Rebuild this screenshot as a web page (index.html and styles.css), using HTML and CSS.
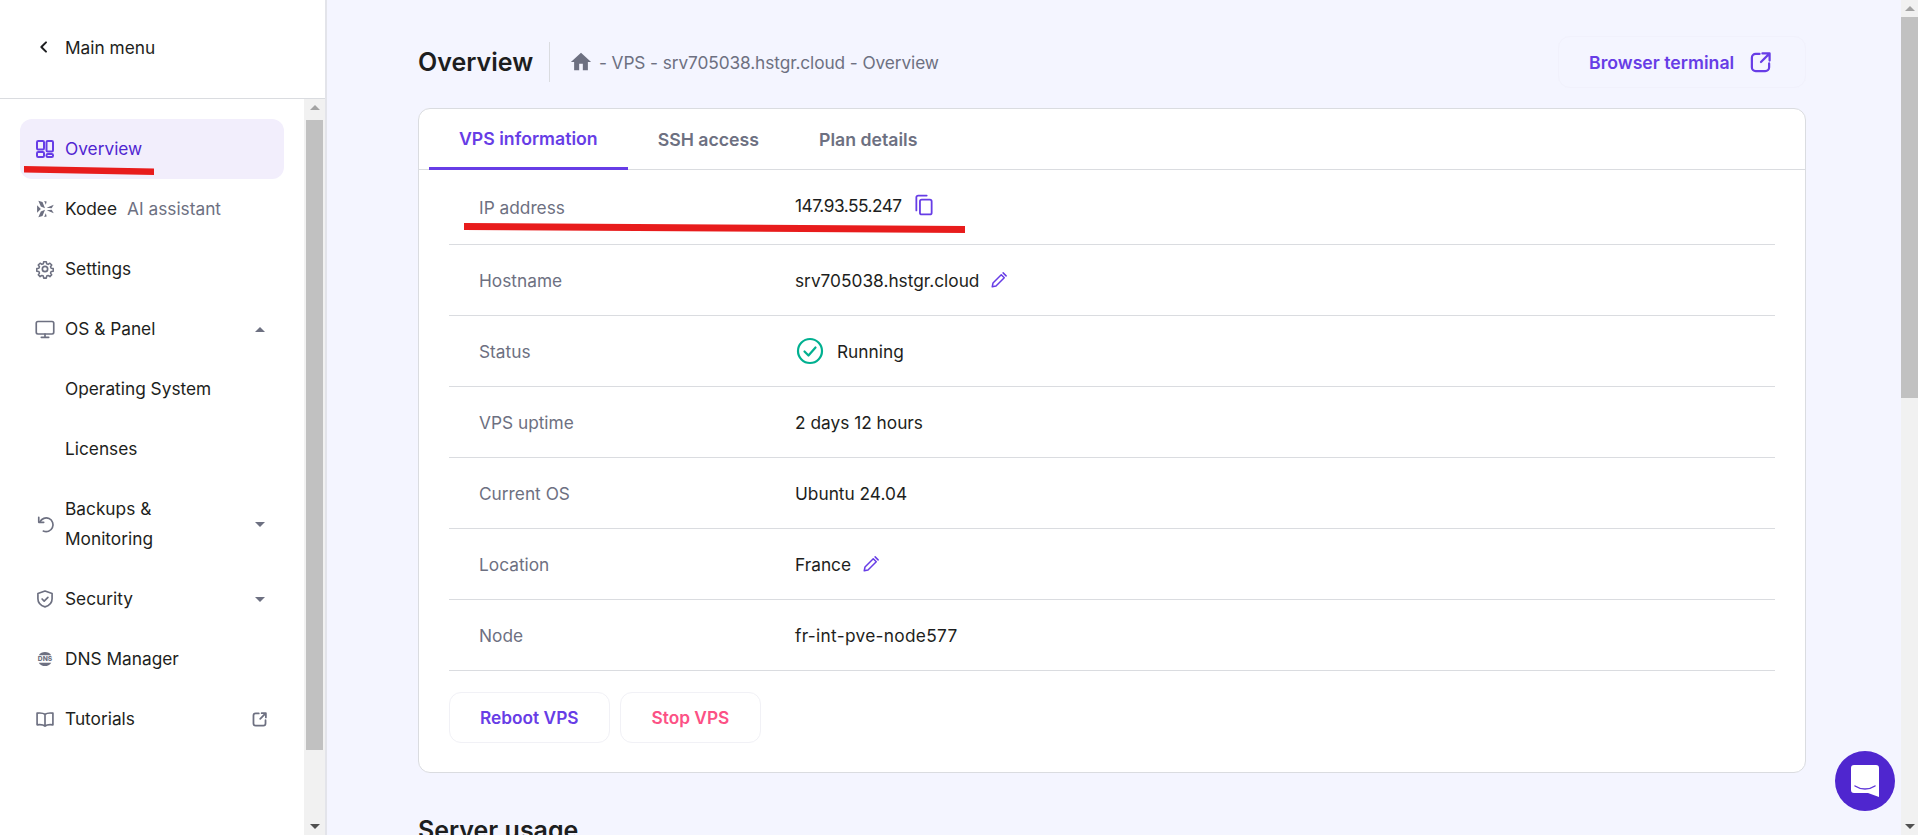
FILE: index.html
```html
<!DOCTYPE html>
<html lang="en">
<head>
    <meta charset="UTF-8">
    <title>Overview | VPS</title>
    <link rel="stylesheet" href="styles.css">
</head>
<body>
    <aside class="sidebar">
        <div class="side-top">
            <svg class="back" viewBox="0 0 24 24"><path d="M15 5l-7 7 7 7"/></svg>
            <span>Main menu</span>
        </div>
        <div class="side-body">
            <nav class="side-nav">
                <a class="nav-item active">
                    <svg class="ico" viewBox="0 0 20 20"><rect x="2" y="2" width="7" height="8.500" rx="1.200"/><rect x="11.500" y="2" width="6.500" height="10.500" rx="1.200"/><rect x="2" y="13" width="7" height="5" rx="1.200"/><rect x="11.500" y="15" width="6.500" height="3" rx="1.200"/></svg>
                    <span>Overview</span>
                </a>
                <a class="nav-item">
                    <svg class="ico" viewBox="0 0 24 24"><path class="solid" d="M4 2l5 1.500L12 11 7 9zM4 22l5-1.500L12 13l-5 2zM2.500 7.500L7 12l-4.500 4.500zM14 10.500L22.500 7 20 11zM14 13.500l8.500 3.500L20 13zM11 2.500l3 .5-1 4zM11 21.500l3-.5-1-4z"/></svg>
                    <span>Kodee</span><span class="nav-note">AI assistant</span>
                </a>
                <a class="nav-item">
                    <svg class="ico" viewBox="0 0 24 24"><circle cx="12" cy="12" r="3.200"/><path d="M10.300 2.500h3.400l.5 2.700 1.900.8 2.300-1.600 2.400 2.400-1.600 2.300.8 1.900 2.700.5v3.400l-2.700.5-.8 1.900 1.600 2.300-2.400 2.400-2.300-1.600-1.900.8-.5 2.700h-3.400l-.5-2.700-1.900-.8-2.300 1.600-2.400-2.400 1.600-2.300-.8-1.900-2.700-.5v-3.400l2.700-.5.8-1.900-1.600-2.300 2.400-2.400 2.300 1.600 1.900-.8z" transform="translate(12 12) scale(.92) translate(-12 -12)"/></svg>
                    <span>Settings</span>
                </a>
                <a class="nav-item">
                    <svg class="ico" viewBox="0 0 24 24"><rect x="1.500" y="3" width="21" height="15" rx="2"/><path d="M12 18v3.500M7.500 22h9"/></svg>
                    <span>OS &amp; Panel</span>
                    <i class="caret up"></i>
                </a>
                <a class="nav-item sub"><span>Operating System</span></a>
                <a class="nav-item sub"><span>Licenses</span></a>
                <a class="nav-item tall">
                    <svg class="ico" viewBox="0 0 24 24"><path d="M6 9.500A8.200 8.200 0 1 1 10 20.400"/><path d="M4.500 4v6h6"/></svg>
                    <span>Backups &amp;<br>Monitoring</span>
                    <i class="caret"></i>
                </a>
                <a class="nav-item">
                    <svg class="ico" viewBox="0 0 24 24"><path d="M12 2.500l8.500 3v6.200c0 5-3.600 8.300-8.500 9.800-4.900-1.500-8.500-4.800-8.500-9.800V5.500z"/><path d="M8.500 12l2.500 2.500 4.500-4.500"/></svg>
                    <span>Security</span>
                    <i class="caret"></i>
                </a>
                <a class="nav-item">
                    <svg class="ico" viewBox="0 0 24 24"><path class="solid" d="M4.500 7.500a9 9 0 0 1 15 0zM4.500 16.500a9 9 0 0 0 15 0z"/><text class="dns-text" x="12" y="14.800">DNS</text></svg>
                    <span>DNS Manager</span>
                </a>
                <a class="nav-item">
                    <svg class="ico" viewBox="0 0 24 24"><path d="M12 6.500C10 4.800 6.500 4.500 2.500 5v14c4-.5 7.500-.2 9.500 1.500 2-1.700 5.500-2 9.500-1.500V5c-4-.5-7.500-.2-9.500 1.500zM12 6.500v14"/></svg>
                    <span>Tutorials</span>
                    <svg class="ext" viewBox="0 0 24 24"><path d="M11 3.500H6.500a3 3 0 0 0-3 3v11a3 3 0 0 0 3 3h11a3 3 0 0 0 3-3V13M13 11l7.500-7.500M15 3h6v6"/></svg>
                </a>
            </nav>
            <div class="scrollbar">
                <i class="arrow up"></i>
                <div class="track side-track"><div class="thumb side-thumb"></div></div>
                <i class="arrow"></i>
            </div>
        </div>
        <svg class="scribble scribble-nav" viewBox="0 0 130 9" preserveAspectRatio="none"><path d="M0 0L130 2.500V9L0 6.500z"/></svg>
    </aside>

    <main class="content">
        <div class="page-head">
            <h1>Overview</h1>
            <div class="crumbs">
                <svg class="home" viewBox="0 0 24 24"><path d="M10 21v-7h4v7h5.500v-9H23L12 2 1 12h3.500v9z"/></svg>
                <span>- VPS - srv705038.hstgr.cloud - Overview</span>
            </div>
            <a class="btn-terminal">
                <span>Browser terminal</span>
                <svg viewBox="0 0 24 24"><path d="M11 3H7A4 4 0 0 0 3 7v10a4 4 0 0 0 4 4h10a4 4 0 0 0 4-4v-4M12.500 11.500L21 3M14 2.500h7.500V10"/></svg>
            </a>
        </div>

        <section class="card">
            <div class="tabs">
                <a class="tab active">VPS information</a>
                <a class="tab">SSH access</a>
                <a class="tab">Plan details</a>
            </div>
            <div class="rows">
                <div class="row first">
                    <div class="row-label">IP address</div>
                    <div class="row-value ip">
                        <span>147.93.55.247</span>
                        <svg class="copy" viewBox="0 0 20 24"><path d="M1.500 18V3.500a2 2 0 0 1 2-2H13"/><rect x="5.500" y="6" width="13" height="16.500" rx="2"/></svg>
                    </div>
                </div>
                <div class="row">
                    <div class="row-label">Hostname</div>
                    <div class="row-value">
                        <span>srv705038.hstgr.cloud</span>
                        <svg class="edit" viewBox="0 0 24 24"><path d="M3 21l1-5L15 5l4 4L8 20zM17.500 2.500l4 4"/></svg>
                    </div>
                </div>
                <div class="row">
                    <div class="row-label">Status</div>
                    <div class="row-value status">
                        <svg class="ok" viewBox="0 0 28 28"><circle cx="14" cy="14" r="12"/><path d="M8.500 14.500l4 4 7-8"/></svg>
                        <span>Running</span>
                    </div>
                </div>
                <div class="row">
                    <div class="row-label">VPS uptime</div>
                    <div class="row-value"><span>2 days 12 hours</span></div>
                </div>
                <div class="row">
                    <div class="row-label">Current OS</div>
                    <div class="row-value"><span>Ubuntu 24.04</span></div>
                </div>
                <div class="row">
                    <div class="row-label">Location</div>
                    <div class="row-value">
                        <span>France</span>
                        <svg class="edit" viewBox="0 0 24 24"><path d="M3 21l1-5L15 5l4 4L8 20zM17.500 2.500l4 4"/></svg>
                    </div>
                </div>
                <div class="row">
                    <div class="row-label">Node</div>
                    <div class="row-value node"><span>fr-int-pve-node577</span></div>
                </div>
            </div>
            <div class="actions">
                <button class="btn-action reboot">Reboot VPS</button>
                <button class="btn-action stop">Stop VPS</button>
            </div>
            <svg class="scribble scribble-ip" viewBox="0 0 501 10" preserveAspectRatio="none"><path d="M0 0L501 3V10L0 7z"/></svg>
        </section>

        <h2 class="section-title">Server usage</h2>

        <button class="chat">
            <svg viewBox="0 0 28 32"><path class="bubble" d="M3 0h22a3 3 0 0 1 3 3v29l-11-4H3a3 3 0 0 1-3-3V3a3 3 0 0 1 3-3z"/><path class="smile" d="M4 21c6 4 14 4 20 0"/></svg>
        </button>
    </main>

    <div class="scrollbar page-bar">
        <i class="arrow up"></i>
        <div class="track page-track"><div class="thumb page-thumb"></div></div>
        <i class="arrow"></i>
    </div>
</body>
</html>
```

FILE: styles.css
```css
* {
    box-sizing: border-box;
}
html, body {
    height: 100%;
}
body {
    margin: 0;
    display: flex;
    height: 835px;
    overflow: hidden;
    font-family: Inter, "Noto Sans", sans-serif;
    font-size: 17.3px;
    color: #1d1e20;
    background-color: #f4f5ff;
}
svg {
    fill: none;
    stroke: currentColor;
    stroke-width: 2;
    stroke-linecap: round;
    stroke-linejoin: round;
    flex: none;
}

/* sidebar */
.sidebar {
    position: relative;
    width: 327px;
    flex: none;
    display: flex;
    flex-direction: column;
    background-color: #fff;
    border-right: 2px solid #e3e4ea;
}
.side-top {
    height: 99px;
    flex: none;
    display: flex;
    align-items: center;
    padding: 0 0 4px 36px;
    gap: 13px;
    border-bottom: 1px solid #dadce0;
}
.back {
    width: 16px;
    height: 16px;
    stroke-width: 3;
}
.side-body {
    flex: 1;
    display: flex;
    min-height: 0;
}
.side-nav {
    flex: 1;
    padding: 20px 20px 0;
}
.nav-item {
    height: 60px;
    display: flex;
    align-items: center;
    padding: 0 16px 0 15px;
    gap: 10px;
    border-radius: 12px;
    line-height: 30px;
}
.nav-item.active {
    background-color: #f2eefc;
    color: #5025d1;
}
.nav-item.active .ico {
    color: #673de6;
}
.nav-item.tall {
    height: 90px;
}
.nav-item.sub {
    padding-left: 45px;
}
.nav-note {
    color: #6d7081;
}
.ico {
    width: 20px;
    height: 20px;
    color: #6d7081;
}
.solid {
    fill: currentColor;
    stroke: none;
}
.dns-text {
    font-size: 8px;
    font-weight: 800;
    text-anchor: middle;
    fill: currentColor;
    stroke: none;
}
.caret {
    margin-left: auto;
    margin-right: 3px;
    border-left: 5px solid transparent;
    border-right: 5px solid transparent;
    border-top: 5px solid #6d7081;
}
.caret.up {
    border-top: 0;
    border-bottom: 5px solid #6d7081;
}
.ext {
    width: 17px;
    height: 17px;
    margin-left: auto;
    color: #6d7081;
    stroke-width: 2.500;
}

/* fake scrollbars */
.scrollbar {
    width: 21px;
    flex: none;
    display: flex;
    flex-direction: column;
    align-items: center;
    background-color: #f1f1f1;
}
.track {
    flex: 1;
    width: 100%;
    padding: 0 2px;
}
.thumb {
    background-color: #c1c1c1;
}
.side-track {
    padding-top: 4px;
}
.side-thumb {
    height: 630px;
}
.arrow {
    display: block;
    margin: 6px 0;
    border-left: 5px solid transparent;
    border-right: 5px solid transparent;
    border-top: 5px solid #505050;
}
.arrow.up {
    border-top: 0;
    border-bottom: 5px solid #a3a3a3;
}
.page-bar {
    width: 17px;
}
.page-track {
    padding: 0;
}
.page-thumb {
    height: 381px;
}

/* main */
.content {
    position: relative;
    flex: 1;
    min-width: 0;
    padding: 36px 95px 0 91px;
    overflow: hidden;
}
.page-head {
    height: 52px;
    display: flex;
    align-items: center;
    margin-bottom: 20px;
}
.page-head h1 {
    width: 132px;
    margin: 0;
    font-size: 25px;
    font-weight: 600;
    line-height: 40px;
    border-right: 1px solid #dadce0;
}
.crumbs {
    display: flex;
    align-items: center;
    gap: 7px;
    margin-left: 20px;
    letter-spacing: -0.1px;
    color: #6d7081;
}
.home {
    width: 22px;
    height: 22px;
    fill: #6d7081;
    stroke: none;
}
.btn-terminal {
    margin-left: auto;
    width: 248px;
    height: 52px;
    display: flex;
    align-items: center;
    gap: 15px;
    padding-left: 30px;
    border: 1px solid #f1f1fc;
    border-radius: 12px;
    font-size: 17.7px;
    font-weight: 600;
    color: #673de6;
}
.btn-terminal svg {
    width: 23px;
    height: 23px;
    stroke-width: 2.300;
}
.card {
    position: relative;
    height: 665px;
    background-color: #fff;
    border: 1px solid #dadce0;
    border-radius: 12px;
}
.tabs {
    height: 61px;
    display: flex;
    padding-left: 10px;
    border-bottom: 1px solid #dadce0;
}
.tab {
    height: 61px;
    display: flex;
    align-items: center;
    padding: 0 30px;
    font-size: 17.7px;
    font-weight: 600;
    color: #6d7081;
}
.tab.active {
    color: #673de6;
    border-bottom: 3px solid #673de6;
}
.rows {
    padding: 0 30px;
}
.row {
    height: 71px;
    display: flex;
    align-items: center;
    padding-left: 30px;
    border-bottom: 1px solid #dadce0;
}
.row.first {
    height: 75px;
}
.row-label {
    width: 316px;
    flex: none;
    color: #6d7081;
}
.row-value {
    display: flex;
    align-items: center;
    gap: 13px;
}
.row-value.ip {
    margin-top: -4px;
    letter-spacing: -0.5px;
}
.row-value.node {
    letter-spacing: 0.3px;
}
.copy {
    width: 18px;
    height: 22px;
    color: #673de6;
}
.edit {
    width: 18px;
    height: 18px;
    margin-left: -2px;
    color: #673de6;
}
.status {
    gap: 13px;
}
.ok {
    width: 28px;
    height: 28px;
    margin-left: 1px;
    color: #00b090;
    stroke-width: 2.200;
}
.actions {
    display: flex;
    gap: 10px;
    padding: 21px 0 0 30px;
}
.btn-action {
    height: 51px;
    padding: 0 30px;
    background-color: #fff;
    border: 1px solid #f1f1f6;
    border-radius: 12px;
    font-family: inherit;
    font-size: 17.3px;
    font-weight: 600;
}
.reboot {
    color: #673de6;
}
.stop {
    padding: 0 31px;
    color: #fc5185;
}
.section-title {
    margin: 41px 0 0;
    font-size: 25px;
    font-weight: 600;
    line-height: 32px;
}
.chat {
    position: absolute;
    right: 6px;
    bottom: 24px;
    width: 60px;
    height: 60px;
    display: flex;
    align-items: center;
    justify-content: center;
    padding: 0;
    border: 0;
    border-radius: 50%;
    background-color: #4f26cf;
}
.chat svg {
    width: 28px;
    height: 32px;
}
.bubble {
    fill: #fff;
    stroke: none;
}
.smile {
    stroke: #5f37d8;
    stroke-width: 1.500;
}

/* red marker lines drawn on the screenshot */
.scribble {
    position: absolute;
    fill: #e81c1c;
    stroke: none;
}
.scribble-nav {
    left: 24px;
    top: 166px;
    width: 130px;
    height: 9px;
}
.scribble-ip {
    left: 45px;
    top: 114px;
    width: 501px;
    height: 10px;
}
```
